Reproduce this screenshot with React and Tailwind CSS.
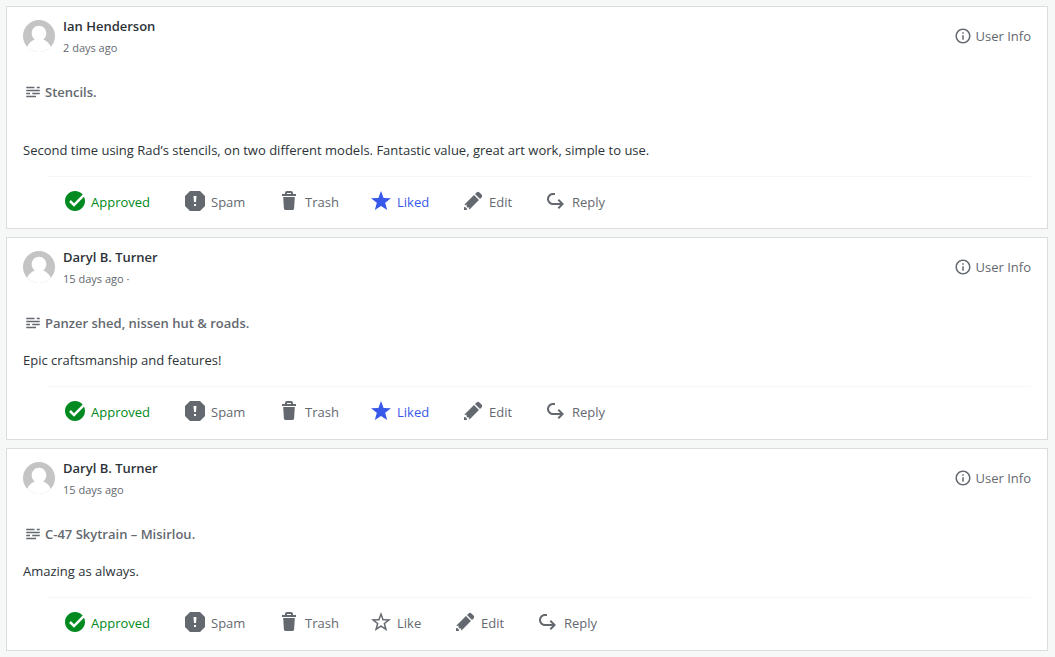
import { clsx } from 'clsx';

const icons = {
    checkmarkCircle:
        'M11 17.768l-4.884-4.884 1.768-1.768L11 14.232l8.658-8.658C17.823 3.391 15.075 2 12 2 6.477 2 2 6.477 2 12s4.477 10 10 10 10-4.477 10-10c0-1.528-.353-2.971-.966-4.266L11 17.768z',
    spam: 'M17 2H7L2 7v10l5 5h10l5-5V7l-5-5zm-4 15h-2v-2h2v2zm0-4h-2l-.5-6h3l-.5 6z',
    trash: 'M6.187 8h11.625l-.695 11.125A2 2 0 0 1 15.121 21H8.879a2 2 0 0 1-1.996-1.875L6.187 8zM19 5v2H5V5h3V4a2 2 0 0 1 2-2h4a2 2 0 0 1 2 2v1h3zm-9 0h4V4h-4v1z',
    star: 'M12 2l2.582 6.953L22 9.257l-5.822 4.602L18.18 21 12 16.89 5.82 21l2.002-7.14L2 9.256l7.418-.304L12 2z',
    starOutline:
        'M12 6.308l1.176 3.167.347.936.997.041 3.374.139-2.647 2.092-.784.62.27.963.911 3.249-2.814-1.871-.83-.553-.83.552-2.814 1.871.911-3.249.27-.962-.784-.62-2.648-2.092 3.374-.139.997-.041.347-.936L12 6.308M12 2L9.418 8.953 2 9.257l5.822 4.602L5.82 21 12 16.891 18.18 21l-2.002-7.141L22 9.257l-7.418-.305L12 2z',
    pencil: 'M13 6l5 5-9.507 9.507a1.765 1.765 0 0 1-.012-2.485l-.002-.003c-.69.676-1.8.673-2.485-.013a1.763 1.763 0 0 1-.036-2.455l-.008-.008c-.694.65-1.78.64-2.456-.036L13 6zm7.586-.414l-2.172-2.172a2 2 0 0 0-2.828 0L14 5l5 5 1.586-1.586c.78-.78.78-2.047 0-2.828zM3 18v3h3a3 3 0 0 0-3-3z',
    reply: 'M9 16h7.2l-2.6 2.6L15 20l5-5-5-5-1.4 1.4 2.6 2.6H9c-2.2 0-4-1.8-4-4s1.8-4 4-4h2V4H9c-3.3 0-6 2.7-6 6s2.7 6 6 6z',
    info: 'M13 9h-2V7h2v2zm0 2h-2v6h2v-6zm-1-7c-4.411 0-8 3.589-8 8s3.589 8 8 8 8-3.589 8-8-3.589-8-8-8m0-2c5.523 0 10 4.477 10 10s-4.477 10-10 10S2 17.523 2 12 6.477 2 12 2z',
    posts: 'M16 19H3v-2h13v2zm5-10H3v2h18V9zM3 5v2h11V5H3zm14 0v2h4V5h-4zm-6 8v2h10v-2H11zm-8 0v2h5v-2H3z',
};

const comments = [
    {
        id: 1,
        author: 'Ian Henderson',
        date: '2 days ago',
        post: 'Stencils.',
        text: 'Second time using Rad’s stencils, on two different models. Fantastic value, great art work, simple to use.',
        liked: true,
        spaced: true,
    },
    {
        id: 2,
        author: 'Daryl B. Turner',
        date: '15 days ago ·',
        post: 'Panzer shed, nissen hut & roads.',
        text: 'Epic craftsmanship and features!',
        liked: true,
    },
    {
        id: 3,
        author: 'Daryl B. Turner',
        date: '15 days ago',
        post: 'C-47 Skytrain – Misirlou.',
        text: 'Amazing as always.',
        liked: false,
    },
];

const Icon = ({ name, className = 'size-6' }) => (
    <svg viewBox="0 0 24 24" fill="currentColor" aria-hidden="true" className={clsx('shrink-0', className)}>
        <path d={icons[name]} />
    </svg>
);

const Avatar = () => (
    <svg viewBox="0 0 32 32" aria-hidden="true" className="size-8 shrink-0 rounded-full">
        <rect width="32" height="32" fill="#c4c4c4" />
        <path
            fill="#fff"
            d="M16 5.800c4.200 0 7.300 3.200 7.300 7.400 0 2.600-1.200 4.900-3 6.200 3.500 1.300 6.200 4 7.600 7.600V32H4.100v-5c1.400-3.600 4.100-6.300 7.600-7.600-1.800-1.300-3-3.600-3-6.200 0-4.200 3.100-7.400 7.300-7.400z"
        />
    </svg>
);

const Action = ({ icon, label, className, color = 'text-[#646970]' }) => (
    <button type="button" className={clsx('flex items-center gap-1 pl-4 leading-5', color, className)}>
        <Icon name={icon} />
        <span className="pt-0.5">{label}</span>
    </button>
);

const Comment = ({ author, date, post, text, liked, spaced }) => (
    <article className={clsx('border border-[#dcdcde] bg-white px-4', spaced ? 'pb-[15px]' : 'pb-4')}>
        <header className="flex items-start justify-between pt-2">
            <div className="flex items-start gap-2">
                <div className="pt-[5px]">
                    <Avatar />
                </div>
                <div>
                    <h2 className="leading-[22px] font-semibold text-[#2c3338]">{author}</h2>
                    <p className="text-[11px] leading-[22px] text-[#646970]">{date}</p>
                </div>
            </div>
            <button type="button" className="mt-[11px] flex items-center gap-1 leading-5 text-[#646970]">
                <Icon name="info" className="size-[18px]" />
                User Info
            </button>
        </header>
        <a href="#post" className="mt-[23px] flex w-fit items-center gap-[3px] px-px leading-5 font-semibold text-[#646970]">
            <Icon name="posts" className="size-[18px]" />
            {post}
        </a>
        <p className={clsx('leading-[21px] text-[#2c3338]', spaced ? 'mt-[38px]' : 'mt-[17px]')}>{text}</p>
        <div className="mt-[15px] ml-6 flex border-t border-[#f6f7f7] pt-3">
            <Action icon="checkmarkCircle" label="Approved" color="text-[#008a20]" className="w-[120px]" />
            <Action icon="spam" label="Spam" className="w-[94px]" />
            <Action icon="trash" label="Trash" className="w-[92px]" />
            {liked ? (
                <Action icon="star" label="Liked" color="text-[#3858e9]" className="w-[92px]" />
            ) : (
                <Action icon="starOutline" label="Like" className="w-[84px]" />
            )}
            <Action icon="pencil" label="Edit" className="w-[83px]" />
            <Action icon="reply" label="Reply" />
        </div>
    </article>
);

export default function App() {
    return (
        <main className="flex min-h-screen flex-col gap-2 bg-[#f6f7f7] py-1.5 pr-[7px] pl-1.5 font-['Open_Sans','Noto_Sans',sans-serif] text-[13px]">
            {comments.map((comment) => (
                <Comment key={comment.id} {...comment} />
            ))}
        </main>
    );
}
